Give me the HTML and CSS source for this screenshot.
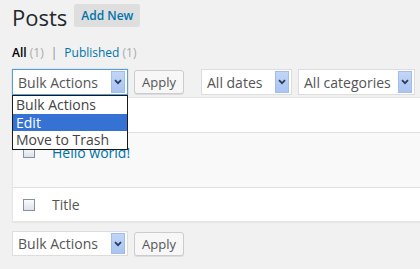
FILE: index.html
```html
<!DOCTYPE html>
<html lang="en">
<head>
<meta charset="utf-8">
<title>Posts</title>
<link rel="stylesheet" href="styles.css">
</head>
<body>
<div class="wrap">
  <div class="page-head">
    <h1 class="page-title">Posts</h1>
    <a class="add-new" href="#">Add New</a>
  </div>
  <ul class="subsubsub">
    <li class="current">All <span class="count">(1)</span></li>
    <li class="sep">|</li>
    <li><a href="#">Published</a> <span class="count">(1)</span></li>
  </ul>

  <div class="tablenav top">
    <div class="select select-bulk focused">
      <span class="select-label">Bulk Actions</span>
      <span class="select-arrow"><svg viewBox="0 0 8 6" width="8" height="6"><path d="M1 1.2 L4 4.2 L7 1.2" fill="none" stroke="#2c3d5c" stroke-width="1.8"/></svg></span>
    </div>
    <button class="btn">Apply</button>
    <div class="select select-dates">
      <span class="select-label">All dates</span>
      <span class="select-arrow"><svg viewBox="0 0 8 6" width="8" height="6"><path d="M1 1.2 L4 4.2 L7 1.2" fill="none" stroke="#2c3d5c" stroke-width="1.8"/></svg></span>
    </div>
    <div class="select select-cats">
      <span class="select-label">All categories</span>
      <span class="select-arrow"><svg viewBox="0 0 8 6" width="8" height="6"><path d="M1 1.2 L4 4.2 L7 1.2" fill="none" stroke="#2c3d5c" stroke-width="1.8"/></svg></span>
    </div>

    <ul class="dropdown">
      <li>Bulk Actions</li>
      <li class="active">Edit</li>
      <li>Move to Trash</li>
    </ul>
  </div>

  <div class="list-table">
    <div class="row row-head"></div>
    <div class="row row-post">
      <span class="cb"></span>
      <a class="post-title" href="#">Hello world!</a>
    </div>
    <div class="row row-foot">
      <span class="cb"></span>
      <span class="col-title">Title</span>
    </div>
  </div>

  <div class="tablenav bottom">
    <div class="select select-bulk">
      <span class="select-label">Bulk Actions</span>
      <span class="select-arrow"><svg viewBox="0 0 8 6" width="8" height="6"><path d="M1 1.2 L4 4.2 L7 1.2" fill="none" stroke="#2c3d5c" stroke-width="1.8"/></svg></span>
    </div>
    <button class="btn">Apply</button>
  </div>
</div>
</body>
</html>
```

FILE: styles.css
```css
html, body {
  margin: 0;
  padding: 0;
  background: #f1f1f1;
  overflow: hidden;
}

body {
  font-family: "Open Sans", "Noto Sans", sans-serif;
  color: #444;
  width: 420px;
  height: 269px;
}

.wrap {
  padding-left: 12px;
}

.page-head {
  display: flex;
  align-items: center;
  height: 23px;
  margin-top: 4px;
  gap: 7px;
}

.page-title {
  margin: 0;
  font-size: 22px;
  font-weight: 400;
  line-height: 23px;
  color: #23282d;
  position: relative;
  top: 2px;
}

.add-new {
  display: flex;
  align-items: center;
  justify-content: center;
  width: 66px;
  height: 23px;
  background: #dedede;
  border-radius: 2px;
  color: #0073aa;
  font-size: 12px;
  font-weight: 600;
  text-decoration: none;
}

.subsubsub {
  list-style: none;
  margin: 18px 0 0;
  padding: 0;
  display: flex;
  gap: 5px;
  font-size: 12px;
  line-height: 16px;
}

.subsubsub .current {
  color: #000;
  font-weight: 600;
}

.subsubsub .count {
  color: #aaa;
  font-weight: 400;
}

.subsubsub .sep {
  color: #888;
  padding: 0 2px;
}

.subsubsub a {
  color: #0073aa;
  text-decoration: none;
}

.tablenav {
  display: flex;
  align-items: center;
  gap: 6px;
  position: relative;
}

.tablenav.top {
  margin-top: 8px;
  height: 26px;
}

.tablenav.bottom {
  margin-top: 9px;
  height: 25px;
}

.select {
  box-sizing: border-box;
  height: 26px;
  width: 116px;
  background: #fff;
  border: 1px solid #ddd;
  display: flex;
  align-items: center;
  justify-content: space-between;
  padding: 1px 2px 1px 5px;
  font-size: 14px;
  color: #555;
}

.tablenav.bottom .select {
  height: 25px;
}

.select.focused {
  border-color: #5b9dd9;
  box-shadow: 0 0 1px rgba(30, 140, 190, .6);
}

.select-dates {
  width: 91px;
  margin-left: 11px;
}

.select-cats {
  width: 117px;
}

.select-arrow {
  width: 14px;
  align-self: stretch;
  background: linear-gradient(#c2d6f7, #a9c4f2);
  border: 1px solid #a3bde8;
  box-sizing: border-box;
  display: flex;
  align-items: center;
  justify-content: center;
}

.btn {
  box-sizing: border-box;
  height: 24px;
  width: 50px;
  padding: 0;
  background: #f7f7f7;
  border: 1px solid #ccc;
  border-radius: 3px;
  box-shadow: 0 1px 0 #ddd;
  color: #555;
  font-family: "Open Sans", "Noto Sans", sans-serif;
  font-size: 13px;
}

.dropdown {
  position: absolute;
  left: 0;
  top: 26px;
  width: 116px;
  box-sizing: border-box;
  margin: 0;
  padding: 0;
  list-style: none;
  background: #fff;
  border: 1px solid #1a1a1a;
  z-index: 5;
  font-size: 14px;
  color: #444;
}

.dropdown li {
  height: 17.5px;
  line-height: 17.5px;
  padding-left: 3px;
}

.dropdown li.active {
  background: #3572d3;
  color: #fff;
}

.list-table {
  margin-top: 2px;
  background: #fff;
  border: 1px solid #e5e5e5;
  border-right: none;
  box-shadow: 0 1px 1px rgba(0, 0, 0, .04);
}

.row {
  display: flex;
  align-items: center;
  padding-left: 10px;
  font-size: 14px;
  line-height: 20px;
}

.row-head {
  height: 34px;
  border-bottom: 1px solid #e1e1e1;
}

.row-post {
  background: #f9f9f9;
  border-bottom: 1px solid #e1e1e1;
  align-items: flex-start;
  padding-top: 10px;
  box-sizing: border-box;
  height: 55px;
}

.row-post .cb {
  margin-top: 3px;
}

.row-foot {
  height: 33px;
}

.cb {
  box-sizing: border-box;
  width: 12px;
  height: 12px;
  border: 1px solid #8791a3;
  background: linear-gradient(#fbfcfd, #dde2ea);
  margin-right: 17px;
  flex: none;
}

.col-title {
  color: #555;
}

.post-title {
  color: #0073aa;
  font-weight: 400;
  text-decoration: none;
}
```
